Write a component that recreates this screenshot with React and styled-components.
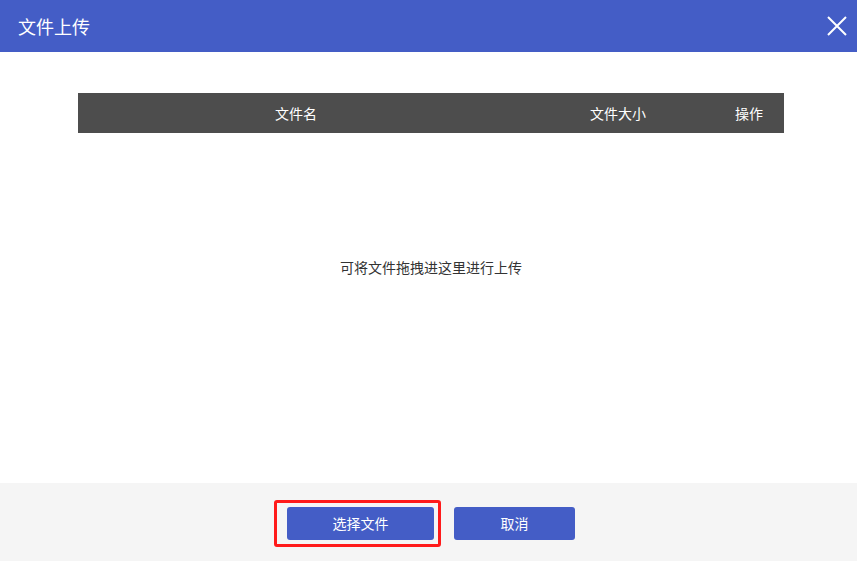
import React from 'react';
import styled, { createGlobalStyle } from 'styled-components';

const GlobalStyle = createGlobalStyle`
  html, body {
    margin: 0;
    padding: 0;
    background: #ffffff;
    font-family: "Noto Sans CJK SC", "Noto Sans", sans-serif;
  }
`;

const StyledDialog = styled.div`
  width: 857px;
  height: 561px;
  display: flex;
  flex-direction: column;
  background: #ffffff;
`;

const StyledHeader = styled.div`
  height: 52px;
  flex-shrink: 0;
  display: flex;
  align-items: center;
  justify-content: space-between;
  padding: 0 8px 0 18px;
  background: #445dc6;
  color: #ffffff;
`;

const StyledTitle = styled.h1`
  margin: 0;
  font-size: 18px;
  font-weight: 400;
  line-height: 1;
`;

const StyledClose = styled.button`
  width: 24px;
  height: 24px;
  padding: 0;
  border: 0;
  background: transparent;
  display: flex;
  align-items: center;
  justify-content: center;
  cursor: pointer;
`;

const StyledBody = styled.div`
  flex: 1;
  display: flex;
  flex-direction: column;
  padding: 41px 73px 0 78px;
`;

const StyledTableHead = styled.div`
  height: 40px;
  display: grid;
  grid-template-columns: 436px 208px 1fr;
  align-items: center;
  background: #4d4d4d;
  color: #ffffff;
  font-size: 14px;
`;

const StyledHeadCell = styled.div`
  text-align: center;
  padding-right: ${({ shift }) => shift || 0}px;
`;

const StyledDropZone = styled.div`
  flex: 1;
  display: flex;
  justify-content: center;
  padding-top: 124px;
  font-size: 14px;
  color: #333333;
`;

const StyledFooter = styled.div`
  height: 78px;
  flex-shrink: 0;
  display: flex;
  align-items: center;
  justify-content: center;
  gap: 20px;
  padding-left: 5px;
  padding-top: 2px;
  box-sizing: border-box;
  background: #f5f5f5;
`;

const StyledButtonWrap = styled.div`
  position: relative;
  display: flex;
`;

const StyledHighlight = styled.div`
  position: absolute;
  left: -13px;
  top: -7px;
  right: -7px;
  bottom: -7px;
  border: 3px solid #ff1a1a;
  border-radius: 3px;
  pointer-events: none;
`;

const StyledButton = styled.button`
  width: ${({ wide }) => (wide ? 147 : 121)}px;
  height: 33px;
  border: 0;
  border-radius: 3px;
  background: #445dc6;
  color: #ffffff;
  font-family: inherit;
  font-size: 14px;
  cursor: pointer;
`;

const CloseIcon = () => (
  <svg width="22" height="22" viewBox="0 0 22 22">
    <path d="M2 2 L20 20 M20 2 L2 20" stroke="#ffffff" strokeWidth="2" fill="none" />
  </svg>
);

const App = () => (
  <>
    <GlobalStyle />
    <StyledDialog>
      <StyledHeader>
        <StyledTitle>文件上传</StyledTitle>
        <StyledClose aria-label="close">
          <CloseIcon />
        </StyledClose>
      </StyledHeader>
      <StyledBody>
        <StyledTableHead>
          <StyledHeadCell>文件名</StyledHeadCell>
          <StyledHeadCell>文件大小</StyledHeadCell>
          <StyledHeadCell shift={8}>操作</StyledHeadCell>
        </StyledTableHead>
        <StyledDropZone>可将文件拖拽进这里进行上传</StyledDropZone>
      </StyledBody>
      <StyledFooter>
        <StyledButtonWrap>
          <StyledButton wide>选择文件</StyledButton>
          <StyledHighlight />
        </StyledButtonWrap>
        <StyledButton>取消</StyledButton>
      </StyledFooter>
    </StyledDialog>
  </>
);

export default App;
